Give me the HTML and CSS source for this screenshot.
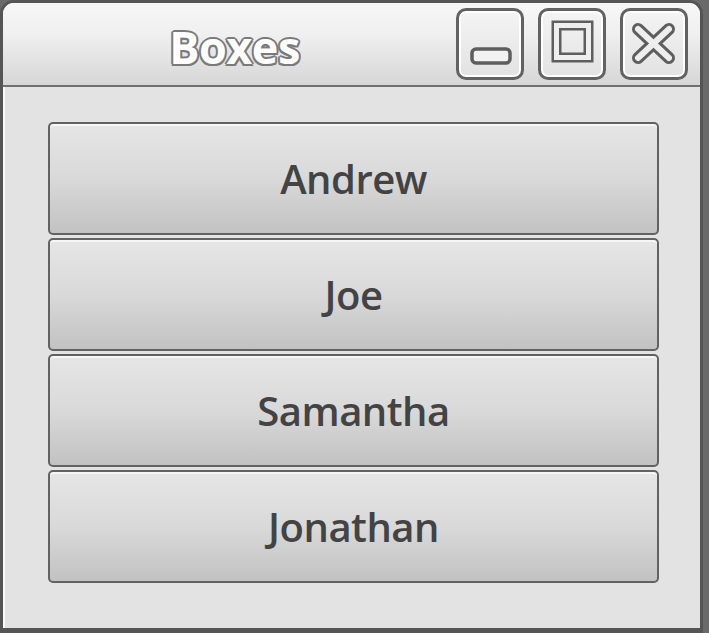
FILE: index.html
```html
<!DOCTYPE html>
<html>
<head>
<meta charset="utf-8">
<link rel="stylesheet" href="styles.css">
</head>
<body>
<div class="window">
  <div class="titlebar">
    <div class="title">Boxes</div>
    <div class="controls">
      <div class="wbtn">
        <svg viewBox="0 0 68 72" width="68" height="72"><rect x="16" y="41" width="38" height="14" rx="4" fill="#f2f2f2" stroke="#5e5e5e" stroke-width="3.5"/></svg>
      </div>
      <div class="wbtn">
        <svg viewBox="0 0 68 72" width="68" height="72"><rect x="18.5" y="17.5" width="32" height="32" fill="none" stroke="#5e5e5e" stroke-width="10"/><rect x="18.5" y="17.5" width="32" height="32" fill="none" stroke="#eeeeee" stroke-width="5"/></svg>
      </div>
      <div class="wbtn">
        <svg viewBox="0 0 68 72" width="68" height="72"><g stroke="#5e5e5e" stroke-width="12" stroke-linecap="round"><line x1="18" y1="21" x2="49" y2="50"/><line x1="49" y1="21" x2="18" y2="50"/></g><g stroke="#eeeeee" stroke-width="6" stroke-linecap="round"><line x1="18" y1="21" x2="49" y2="50"/><line x1="49" y1="21" x2="18" y2="50"/></g></svg>
      </div>
    </div>
  </div>
  <div class="content">
    <div class="box">Andrew</div>
    <div class="box">Joe</div>
    <div class="box">Samantha</div>
    <div class="box">Jonathan</div>
  </div>
</div>
</body>
</html>
```

FILE: styles.css
```css
html, body {
  margin: 0;
  padding: 0;
  background: #6a6a6a;
  width: 709px;
  height: 633px;
  overflow: hidden;
}
.window {
  width: 697px;
  height: 625px;
  border: 3px solid #555555;
  border-bottom-width: 5px;
  border-radius: 14px 14px 0 0;
  background: #e3e3e3;
  display: flex;
  flex-direction: column;
  overflow: hidden;
  font-family: "Open Sans", "DejaVu Sans", sans-serif;
}
.titlebar {
  height: 82px;
  border-bottom: 2px solid #707070;
  background: linear-gradient(#f7f7f7 0%, #efefef 40%, #d6d6d6 100%);
  display: flex;
  align-items: center;
  padding-right: 12px;
}
.title {
  flex: 1;
  text-align: center;
  padding-left: 10px;
  font-weight: 700;
  font-size: 45px;
  color: #ffffff;
  letter-spacing: -0.5px;
  text-shadow: -2px 0 0 #7a7a7a, 2px 0 0 #7a7a7a, 0 -2px 0 #7a7a7a, 0 2px 0 #7a7a7a,
    -1.5px -1.5px 0 #7a7a7a, 1.5px 1.5px 0 #7a7a7a, -1.5px 1.5px 0 #7a7a7a, 1.5px -1.5px 0 #7a7a7a;
  margin-top: 4px;
}
.controls {
  display: flex;
  gap: 14px;
}
.wbtn {
  width: 68px;
  height: 72px;
  box-sizing: border-box;
  border: 3px solid #626262;
  border-radius: 10px;
  background: linear-gradient(#f4f4f4, #e2e2e2);
  box-shadow: inset 0 0 0 2px #ffffff;
  overflow: hidden;
}
.wbtn svg {
  display: block;
  margin: -3px;
}
.content {
  flex: 1;
  padding: 35px 41px 44px 45px;
  display: flex;
  flex-direction: column;
  gap: 3px;
  box-shadow: inset 2px 0 0 #fafafa;
}
.box {
  height: 113px;
  box-sizing: border-box;
  border: 2px solid #626262;
  border-radius: 5px;
  background: linear-gradient(#e6e6e6 0%, #d9d9d9 50%, #c2c2c2 100%);
  box-shadow: inset 0 2px 0 #f6f6f6;
  display: flex;
  align-items: center;
  justify-content: center;
  font-size: 40px;
  font-weight: 600;
  color: #434343;
  letter-spacing: -0.5px;
}
```
